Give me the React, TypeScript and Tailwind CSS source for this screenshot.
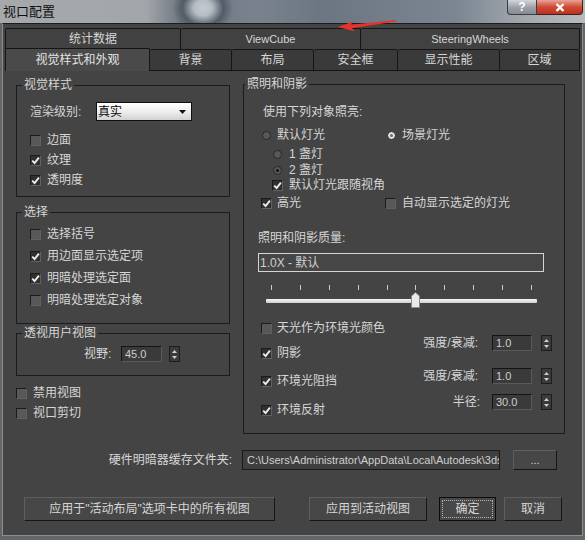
import type { ReactNode } from 'react';

// all CJK strings as escapes so the file stays plain ASCII
const T = {
  title: '\u89c6\u53e3\u914d\u7f6e',
  stats: '\u7edf\u8ba1\u6570\u636e',
  visual: '\u89c6\u89c9\u6837\u5f0f\u548c\u5916\u89c2',
  bg: '\u80cc\u666f',
  layout: '\u5e03\u5c40',
  safe: '\u5b89\u5168\u6846',
  perf: '\u663e\u793a\u6027\u80fd',
  region: '\u533a\u57df',
  visStyle: '\u89c6\u89c9\u6837\u5f0f',
  renderLevel: '\u6e32\u67d3\u7ea7\u522b:',
  real: '\u771f\u5b9e',
  edges: '\u8fb9\u9762',
  texture: '\u7eb9\u7406',
  transp: '\u900f\u660e\u5ea6',
  select: '\u9009\u62e9',
  selBrackets: '\u9009\u62e9\u62ec\u53f7',
  selEdges: '\u7528\u8fb9\u9762\u663e\u793a\u9009\u5b9a\u9879',
  shadeFaces: '\u660e\u6697\u5904\u7406\u9009\u5b9a\u9762',
  shadeObjs: '\u660e\u6697\u5904\u7406\u9009\u5b9a\u5bf9\u8c61',
  persp: '\u900f\u89c6\u7528\u6237\u89c6\u56fe',
  fov: '\u89c6\u91ce:',
  disable: '\u7981\u7528\u89c6\u56fe',
  clip: '\u89c6\u53e3\u526a\u5207',
  lighting: '\u7167\u660e\u548c\u9634\u5f71',
  illum: '\u4f7f\u7528\u4e0b\u5217\u5bf9\u8c61\u7167\u4eae:',
  defLights: '\u9ed8\u8ba4\u706f\u5149',
  sceneLights: '\u573a\u666f\u706f\u5149',
  oneLight: '1 \u76cf\u706f',
  twoLight: '2 \u76cf\u706f',
  follow: '\u9ed8\u8ba4\u706f\u5149\u8ddf\u968f\u89c6\u89d2',
  highlight: '\u9ad8\u5149',
  autoShow: '\u81ea\u52a8\u663e\u793a\u9009\u5b9a\u7684\u706f\u5149',
  quality: '\u7167\u660e\u548c\u9634\u5f71\u8d28\u91cf:',
  qualityVal: '1.0X - \u9ed8\u8ba4',
  skylight: '\u5929\u5149\u4f5c\u4e3a\u73af\u5883\u5149\u989c\u8272',
  shadows: '\u9634\u5f71',
  ao: '\u73af\u5883\u5149\u963b\u6321',
  refl: '\u73af\u5883\u53cd\u5c04',
  intensity: '\u5f3a\u5ea6/\u8870\u51cf:',
  radius: '\u534a\u5f84:',
  cache: '\u786c\u4ef6\u660e\u6697\u5668\u7f13\u5b58\u6587\u4ef6\u5939:',
  applyAll: '\u5e94\u7528\u4e8e"\u6d3b\u52a8\u5e03\u5c40"\u9009\u9879\u5361\u4e2d\u7684\u6240\u6709\u89c6\u56fe',
  applyActive: '\u5e94\u7528\u5230\u6d3b\u52a8\u89c6\u56fe',
  ok: '\u786e\u5b9a',
  cancel: '\u53d6\u6d88',
};

function Check({ on }: { on?: boolean }) {
  return (
    <span
      className={`flex h-[11px] w-[11px] shrink-0 items-center justify-center border border-t-[#1b1b1b] border-l-[#1b1b1b] border-b-[#616161] border-r-[#616161] ${
        on ? 'bg-[#303030]' : 'bg-[#585858]'
      }`}
    >
      {on && (
        <svg width="9" height="9" viewBox="0 0 9 9">
          <path d="M1.2 4.6 L3.6 7 L7.9 1.6" fill="none" stroke="#ececec" strokeWidth="1.9" />
        </svg>
      )}
    </span>
  );
}

function Radio({ on, dark }: { on?: boolean; dark?: boolean }) {
  return (
    <span
      className={`flex h-[9px] w-[9px] shrink-0 items-center justify-center rounded-full border border-[#262626] ${
        on && !dark ? 'bg-[#e4e4e4]' : 'bg-[#595959]'
      }`}
    >
      {on && (
        <span className={`h-[3px] w-[3px] rounded-full ${dark ? 'bg-[#0c0c0c]' : 'bg-[#6a6a6a]'}`} />
      )}
    </span>
  );
}

function Spinner() {
  return (
    <span className="flex h-[16px] w-[11px] shrink-0 flex-col items-center justify-center gap-[3px] border border-[#1d1d1d] bg-[#3b3b3b]">
      <svg width="5" height="3" viewBox="0 0 5 3">
        <path d="M2.5 0 L5 3 L0 3Z" fill="#d0d0d0" />
      </svg>
      <svg width="5" height="3" viewBox="0 0 5 3">
        <path d="M0 0 L5 0 L2.5 3Z" fill="#d0d0d0" />
      </svg>
    </span>
  );
}

function Num({ v, w }: { v: string; w: string }) {
  return (
    <span
      className={`flex h-[16px] shrink-0 items-center border border-t-[#141414] border-l-[#141414] border-b-[#5a5a5a] border-r-[#5a5a5a] bg-[#3a3a3a] pl-[3px] font-['Liberation_Sans',sans-serif] text-[11px] text-[#cfcfcf] ${w}`}
    >
      {v}
    </span>
  );
}

function Group({ title, labelMl, className, children }: { title: string; labelMl: string; className: string; children: ReactNode }) {
  return (
    <div className={`border border-[#1c1c1c] ${className}`}>
      <div className={`-mt-[8px] w-fit bg-[#444444] px-[2px] leading-[14px] ${labelMl}`}>{title}</div>
      {children}
    </div>
  );
}

function CheckRow({ on, label, className }: { on?: boolean; label: string; className: string }) {
  return (
    <div className={`flex items-center gap-[6px] ${className}`}>
      <Check on={on} />
      <span>{label}</span>
    </div>
  );
}

function Btn({ children, className }: { children: ReactNode; className: string }) {
  return (
    <div
      className={`flex h-[24px] items-center justify-center border border-t-[#5f5f5f] border-l-[#5f5f5f] border-b-[#161616] border-r-[#161616] bg-[#474747] ${className}`}
    >
      {children}
    </div>
  );
}

function ValueRow({ label, v, gap, className }: { label: string; v: string; gap: string; className: string }) {
  return (
    <div className={`flex h-[16px] items-center ${className}`}>
      <span>{label}</span>
      <span className={gap}>
        <Num v={v} w="w-[40px]" />
      </span>
      <span className="ml-[9px]">
        <Spinner />
      </span>
    </div>
  );
}

const row1 = [
  { label: T.stats, w: 'w-[176px] border-l' },
  { label: 'ViewCube', w: 'w-[180px]' },
  { label: 'SteeringWheels', w: 'w-[219px]' },
];

const row2 = [
  { label: T.bg, w: 'w-[82px]' },
  { label: T.layout, w: 'w-[82px]' },
  { label: T.safe, w: 'w-[84px]' },
  { label: T.perf, w: 'w-[102px]' },
  { label: T.region, w: 'w-[80px]' },
];

export default function App() {
  return (
    <div className="relative flex h-[540px] w-[585px] flex-col overflow-hidden bg-[#62676c] font-['Liberation_Sans','Noto_Sans_CJK_SC',sans-serif] text-[12px] leading-[16px] text-[#d6d6d6]">
      {/* title bar */}
      <div className="flex h-[23px] shrink-0 items-start bg-[radial-gradient(ellipse_30px_26px_at_203px_8px,#c3cad1_0%,#b5bcc4_30%,#525b66_68%,transparent_100%),linear-gradient(90deg,#a6a9ac_0%,#a2a6aa_25%,#6c7580_31%,#7a838d_44%,#6b7682_55%,#7b8692_78%,#a4a9ae_90%,#b8bbbe_100%)]">
        <span className="pl-[3px] pt-[3px] font-['Noto_Sans_CJK_SC',sans-serif] text-[13px] leading-[16px] text-[#101010]">{T.title}</span>
        <div className="ml-auto mr-[2px] flex h-[15px]">
          <div className="flex w-[30px] items-center justify-center rounded-bl-[4px] border border-t-0 border-[#3a3e43] bg-[linear-gradient(180deg,#d3d6da,#9aa0a6_55%,#868c92)] text-[12px] font-bold leading-none text-white">
            ?
          </div>
          <div className="flex w-[46px] items-center justify-center rounded-br-[4px] border border-l-0 border-t-0 border-[#40201b] bg-[linear-gradient(180deg,#e8a396,#cf4a36_50%,#b9321f)]">
            <svg width="10" height="9" viewBox="0 0 10 9">
              <path d="M1.5 1 L8.5 8 M8.5 1 L1.5 8" stroke="#fff" strokeWidth="2.4" />
            </svg>
          </div>
        </div>
      </div>

      {/* annotation arrow */}
      <svg className="absolute left-[330px] top-[14px]" width="70" height="20" viewBox="0 0 70 20">
        <path d="M8 13 L23 7.5 L21 10.8 L66 6 L66 7.6 L22 14.2 L25 17.5Z" fill="#e5322b" />
      </svg>

      {/* body */}
      <div className="mx-[2px] mb-[4px] flex flex-1 flex-col border border-t-[#1c1c1c] border-x-[#8d8d8d] border-b-[#8d8d8d] bg-[#444444] pt-[4px]">
        {/* tabs */}
        <div className="mx-[2px] flex h-[21px]">
          {row1.map((t) => (
            <div
              key={t.label}
              className={`flex h-full items-center justify-center rounded-t-[2px] border-t border-r border-[#151515] bg-[#414141] ${t.w}`}
            >
              <span className={t.label === T.stats ? 'text-[12px]' : 'text-[11px]'}>{t.label}</span>
            </div>
          ))}
        </div>
        <div className="mx-[2px] flex h-[22px]">
          <div className="-mt-px flex h-[23px] w-[145px] items-center justify-center rounded-t-[2px] border-x border-t border-[#151515] bg-[#4a4a4a] text-[#e2e2e2]">
            {T.visual}
          </div>
          {row2.map((t) => (
            <div
              key={t.label}
              className={`flex h-full items-center justify-center rounded-t-[2px] border-t border-r border-b border-[#151515] bg-[#3a3a3a] ${t.w}`}
            >
              {t.label}
            </div>
          ))}
        </div>

        {/* columns */}
        <div className="mt-[13px] flex items-start pl-[13px]">
          <div className="mt-px flex w-[214px] flex-col">
            <Group title={T.visStyle} labelMl="ml-[5px]" className="h-[112px]">
              <div className="mt-[10px] flex h-[19px] items-center pl-[13px]">
                <span className="w-[66px]">{T.renderLevel}</span>
                <div className="flex h-[19px] w-[96px] items-center justify-between border border-[#101010] bg-[linear-gradient(180deg,#ffffff,#ececec_55%,#d2d2d2)] pl-[1px] pr-[5px] text-[#050505]">
                  <span>{T.real}</span>
                  <svg width="7" height="4" viewBox="0 0 7 4">
                    <path d="M0 0 H7 L3.5 4Z" fill="#111" />
                  </svg>
                </div>
              </div>
              <div className="mt-[9px] flex flex-col pl-[13px]">
                <CheckRow label={T.edges} className="h-[20px]" />
                <CheckRow on label={T.texture} className="h-[20px]" />
                <CheckRow on label={T.transp} className="h-[20px]" />
              </div>
            </Group>

            <Group title={T.select} labelMl="ml-[5px]" className="mt-[15px] h-[112px]">
              <div className="mt-[4px] flex flex-col pl-[13px]">
                <CheckRow label={T.selBrackets} className="h-[22px]" />
                <CheckRow on label={T.selEdges} className="h-[22px]" />
                <CheckRow on label={T.shadeFaces} className="h-[22px]" />
                <CheckRow label={T.shadeObjs} className="h-[22px]" />
              </div>
            </Group>

            <Group title={T.persp} labelMl="ml-[5px]" className="mt-[9px] h-[43px]">
              <div className="mt-[6px] flex h-[16px] items-center pl-[67px]">
                <span className="w-[37px]">{T.fov}</span>
                <Num v="45.0" w="w-[41px]" />
                <span className="ml-[7px]">
                  <Spinner />
                </span>
              </div>
            </Group>

            <div className="mt-[7px] flex flex-col">
              <CheckRow label={T.disable} className="h-[20px]" />
              <CheckRow label={T.clip} className="h-[20px]" />
            </div>
          </div>

          <Group title={T.lighting} labelMl="ml-[1px]" className="ml-[13px] h-[350px] w-[322px]">
            <div className="mt-[13px] flex h-[16px] items-center pl-[19px]">{T.illum}</div>
            <div className="mt-[7px] flex h-[16px] items-center pl-[18px]">
              <div className="flex w-[125px] items-center gap-[6px]">
                <Radio />
                <span>{T.defLights}</span>
              </div>
              <div className="flex items-center gap-[6px]">
                <Radio on />
                <span>{T.sceneLights}</span>
              </div>
            </div>
            <div className="mt-[3px] flex h-[16px] items-center gap-[7px] pl-[29px]">
              <Radio />
              <span>{T.oneLight}</span>
            </div>
            <div className="flex h-[16px] items-center gap-[7px] pl-[29px]">
              <Radio on dark />
              <span>{T.twoLight}</span>
            </div>
            <CheckRow on label={T.follow} className="h-[14px] pl-[28px]" />
            <div className="mt-[3px] flex h-[16px] items-center pl-[17px]">
              <div className="flex w-[124px] items-center gap-[5px]">
                <Check on />
                <span>{T.highlight}</span>
              </div>
              <div className="flex items-center gap-[6px]">
                <Check />
                <span>{T.autoShow}</span>
              </div>
            </div>

            <div className="mt-[19px] flex h-[16px] items-center pl-[14px]">{T.quality}</div>
            <div className="ml-[14px] mt-[7px] flex h-[19px] w-[286px] items-center border border-[#d4d4d4] bg-[#464646] pl-[1px] text-[#d0d0d0]">
              {T.qualityVal}
            </div>

            <div className="relative ml-[22px] mt-[8px] h-[30px] w-[271px]">
              <div className="flex justify-between px-[5px] pt-[5px]">
                {Array.from({ length: 10 }).map((_, i) => (
                  <span key={i} className="h-[5px] w-px bg-[#cdcdcd]" />
                ))}
              </div>
              <div className="mt-[9px] h-[4px] w-full rounded-[1px] bg-[linear-gradient(180deg,#f6f6f6,#d0d0d0)]" />
              <svg className="absolute left-[145px] top-[12px]" width="9" height="16" viewBox="0 0 9 16">
                <path d="M0.5 4 L4.5 0.5 L8.5 4 V15.5 H0.5Z" fill="#e9e9e9" stroke="#8a8a8a" />
              </svg>
            </div>

            <div className="mt-[10px] flex justify-between pr-[12px]">
              <div className="flex flex-col pl-[17px]">
                <CheckRow label={T.skylight} className="h-[16px] !gap-[5px]" />
                <CheckRow on label={T.shadows} className="mt-[9px] h-[16px] !gap-[5px]" />
                <CheckRow on label={T.ao} className="mt-[12px] h-[16px] !gap-[5px]" />
                <CheckRow on label={T.refl} className="mt-[13px] h-[16px] !gap-[5px]" />
              </div>
              <div className="flex flex-col items-end">
                <ValueRow label={T.intensity} v="1.0" gap="ml-[14px]" className="mt-[15px]" />
                <ValueRow label={T.intensity} v="1.0" gap="ml-[14px]" className="mt-[17px]" />
                <ValueRow label={T.radius} v="30.0" gap="ml-[12px]" className="mt-[10px]" />
              </div>
            </div>
          </Group>
        </div>

        {/* cache folder */}
        <div className="mt-[16px] flex h-[20px] items-center">
          <span className="w-[229px] shrink-0 text-right">{T.cache}</span>
          <div className="ml-[10px] flex h-[20px] w-[258px] shrink-0 items-center overflow-hidden whitespace-nowrap border border-[#1a1a1a] bg-[#3f3f3f] pl-[4px] text-[11px] text-[#cfcfcf]">
            <span className="overflow-hidden">{'C:\\Users\\Administrator\\AppData\\Local\\Autodesk\\3ds'}</span>
          </div>
          <Btn className="ml-[13px] !h-[20px] w-[44px] shrink-0 text-[11px]">...</Btn>
        </div>

        {/* buttons */}
        <div className="mt-[27px] flex h-[24px] items-center">
          <Btn className="ml-[21px] w-[251px]">{T.applyAll}</Btn>
          <Btn className="ml-[34px] w-[118px]">{T.applyActive}</Btn>
          <div className="ml-[12px] flex h-[24px] w-[57px] border border-[#0c0c0c] bg-[#474747] p-[2px]">
            <div className="flex flex-1 items-center justify-center border border-dotted border-[#b5b5b5]">{T.ok}</div>
          </div>
          <Btn className="ml-[8px] w-[58px]">{T.cancel}</Btn>
        </div>
      </div>
    </div>
  );
}
